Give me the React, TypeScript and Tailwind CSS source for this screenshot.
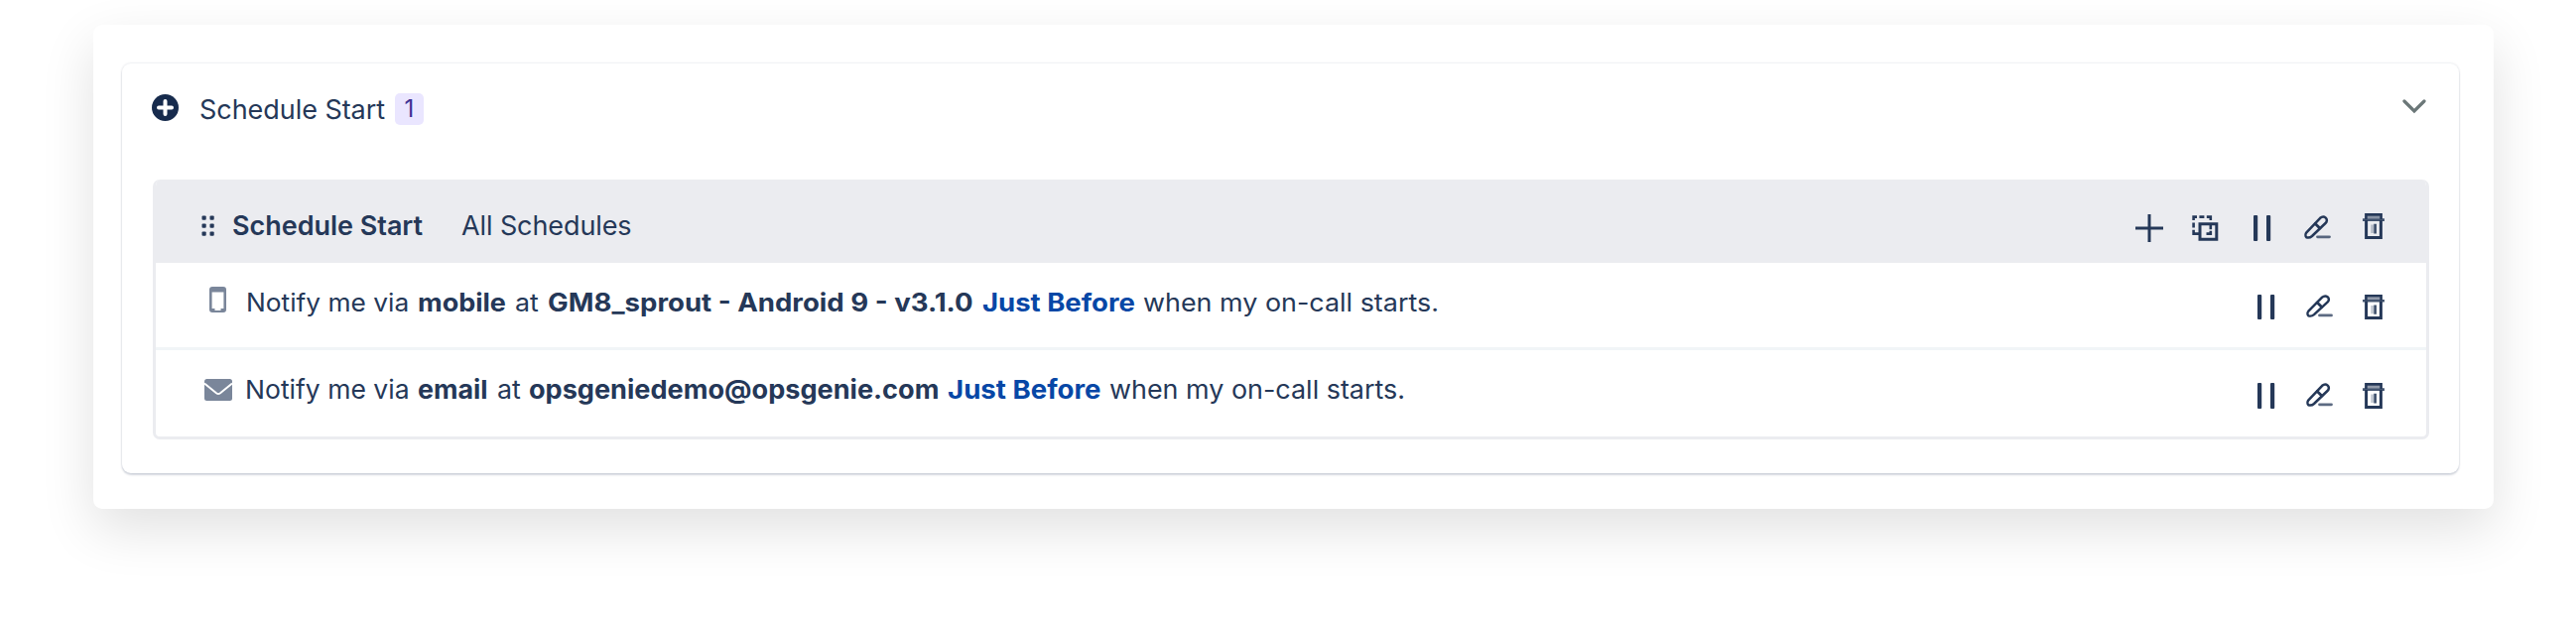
import React from "react";

const NAVY = "#253858";

function PlusIcon() {
  return (
    <svg width="28" height="28" viewBox="0 0 28 28" fill="none" stroke={NAVY} strokeWidth="3">
      <path d="M14 0V28M0 14H28" />
    </svg>
  );
}

function CopyIcon() {
  return (
    <svg width="27" height="26" viewBox="0 0 27 26" fill="none" stroke={NAVY}>
      <path d="M8 8.7H24.8V24.3H8Z" strokeWidth="3" />
      <path d="M1.6 5V1.6H5M7.4 1.6H12.4M14.8 1.6H18.8V5M18.8 8V14.2M18.8 15.8V18.6H14.5M1.6 7.4V12.4M1.6 14.8V18.6H7" strokeWidth="2.6" />
    </svg>
  );
}

function PauseIcon({ height }: { height: number }) {
  return (
    <svg width="18" height={height} viewBox="0 0 18 26" preserveAspectRatio="none" fill={NAVY}>
      <rect x="0" y="0" width="4.2" height="26" rx="1" />
      <rect x="13" y="0" width="4.2" height="26" rx="1" />
    </svg>
  );
}

function EditIcon({ height }: { height: number }) {
  return (
    <svg width="27" height={height} viewBox="0 0 27 24" preserveAspectRatio="none" fill="none" stroke={NAVY} strokeWidth="2.5" strokeLinecap="round" strokeLinejoin="round">
      <path d="M2.4 17.4L16.2 2.8C17.8 1.4 20.2 1.2 21.8 2.6C23.4 4.1 23.1 6.5 21.5 8L8 21C6.4 22.4 4 22.8 2.3 22.2C1.2 21 1.2 18.8 2.4 17.4Z" />
      <path d="M11.2 8.4L15.8 13" strokeWidth="2.8" />
      <path d="M13.5 21.8H25.5" strokeWidth="2.8" opacity="0.75" />
    </svg>
  );
}

function TrashIcon({ height }: { height: number }) {
  return (
    <svg width="22" height={height} viewBox="0 0 22 26" preserveAspectRatio="none" fill="none" stroke={NAVY}>
      <path d="M3.6 7V24.4H18.4V7" strokeWidth="3" />
      <path d="M3.4 6V1.4H18.6V6" strokeWidth="2.6" />
      <path d="M4 3.8H18" strokeWidth="3" opacity="0.5" />
      <path d="M0 6.6H22" strokeWidth="2.6" opacity="0.85" />
      <path d="M9.6 11.5V20" strokeWidth="2.4" opacity="0.3" />
      <path d="M12.6 10.8V20.5" strokeWidth="2.8" opacity="0.85" />
    </svg>
  );
}

function RowActions({ height }: { height: number }) {
  return (
    <div className="flex items-start">
      <div className="w-[49px]"><PauseIcon height={height} /></div>
      <div className="w-[57px]"><EditIcon height={height - 2} /></div>
      <TrashIcon height={height} />
    </div>
  );
}

export default function App() {
  return (
    <div className="h-[624px] w-[2596px] overflow-hidden bg-white px-[94px] pt-[25px] font-['Inter',sans-serif] text-[#253858]">
      <main className="h-[488px] w-[2419px] rounded-[9px] bg-white pt-[39px] pl-[29px] shadow-[0_20px_54px_rgba(0,0,0,0.12)]">
        <section className="h-[413px] w-[2355px] rounded-[9px] pl-[31px] shadow-[0_0_2px_1px_rgba(9,30,66,0.07),0_2px_2px_rgba(9,30,66,0.15)]">
          <header className="flex h-[117px] items-start">
            <svg className="mt-[31px] -ml-px" width="27" height="27" viewBox="0 0 27 27">
              <circle cx="13.5" cy="13.5" r="13.5" fill="#172b4d" />
              <path d="M13.5 7V20M7 13.5H20" stroke="#fff" strokeWidth="4" strokeLinecap="round" />
            </svg>
            <h1 className="mt-[31px] ml-[21px] w-[197px] text-[27px] leading-8 tracking-[-0.05px] whitespace-nowrap">Schedule Start</h1>
            <span className="mt-[30px] h-[32px] w-[29px] rounded-[5px] bg-[#eae6ff] text-center text-[24px] leading-[31px] text-[#403294]">1</span>
            <svg className="mt-[36px] ml-[1994px]" width="24" height="15" viewBox="0 0 24 15" fill="none" stroke="#6b7778" strokeWidth="3.2" strokeLinecap="round">
              <path d="M2 2L12 12L22 2" />
            </svg>
          </header>

          <div className="h-[262px] w-[2294px] overflow-hidden rounded-[7px] border-[3px] border-t-0 border-[#ebecf0]">
            <div className="flex h-[84px] items-start bg-[#ebecf0]">
              <svg className="mt-[36px] ml-[46px]" width="14" height="22" viewBox="0 0 14 22" fill={NAVY}>
                {[0, 8, 16].map((y) => (
                  <g key={y}>
                    <rect x="0.5" y={y + 0.5} width="4.2" height="4.2" rx="1" />
                    <rect x="8.5" y={y + 0.5} width="4.2" height="4.2" rx="1" />
                  </g>
                ))}
              </svg>
              <h2 className="mt-[31px] ml-[17px] w-[231px] text-[27px] leading-8 font-semibold tracking-[-0.03px] whitespace-nowrap">Schedule Start</h2>
              <span className="mt-[31px] w-[1687px] text-[27px] leading-8 tracking-[-0.1px] whitespace-nowrap">All Schedules</span>
              <div className="mt-[35px] w-[57px]"><PlusIcon /></div>
              <div className="mt-[36px] w-[62px]"><CopyIcon /></div>
              <div className="mt-[36px] w-[51px]"><PauseIcon height={26} /></div>
              <div className="mt-[36px] w-[59px]"><EditIcon height={24} /></div>
              <div className="mt-[34px]"><TrashIcon height={26} /></div>
            </div>

            <div className="flex h-[88px] items-start border-b-[3px] border-[#f1f5f7]">
              <svg className="mt-[24px] ml-[54px]" width="17" height="26" viewBox="0 0 17 26">
                <rect width="17" height="26" rx="3" fill="#7a869a" />
                <rect x="2.6" y="5.5" width="11.8" height="16.5" fill="#fff" />
                <rect x="5.5" y="21.5" width="6" height="2.5" fill="#fff" />
              </svg>
              <p className="mt-[24px] ml-[20px] flex h-8 w-[2027px] text-[25px] leading-8 whitespace-nowrap">
                <span className="w-[173px] origin-left scale-x-[1.052]">Notify me via</span>
                <b className="w-[98px] origin-left scale-x-[1.08] font-bold">mobile</b>
                <span className="w-[33px] origin-left scale-x-[1.07]">at</span>
                <b className="w-[438px] origin-left scale-x-[1.104] font-bold">GM8_sprout - Android 9 - v3.1.0</b>
                <b className="w-[162px] origin-left scale-x-[1.1] font-bold text-[#0747a6]">Just Before</b>
                <span className="origin-left scale-x-[1.076]">when my on-call starts.</span>
              </p>
              <div className="mt-[32px]"><RowActions height={25} /></div>
            </div>

            <div className="flex h-[87px] items-start">
              <svg className="mt-[29px] ml-[49px]" width="28" height="22" viewBox="0 0 28 22">
                <rect width="28" height="22" rx="2.5" fill="#7a869a" />
                <path d="M0 4.5L12 14.2Q14 15.6 16 14.2L28 4.5" fill="none" stroke="#fff" strokeWidth="2" />
              </svg>
              <p className="mt-[24px] ml-[13px] flex h-8 w-[2028px] text-[26px] leading-8 whitespace-nowrap">
                <span className="w-[174px] origin-left scale-x-[1.02]">Notify me via</span>
                <b className="w-[80px] origin-left scale-x-[1.03] font-bold">email</b>
                <span className="w-[32px] origin-left scale-x-[1.03]">at</span>
                <b className="w-[422px] origin-left scale-x-[1.042] font-bold">opsgeniedemo@opsgenie.com</b>
                <b className="w-[163px] origin-left scale-x-[1.062] font-bold text-[#0747a6]">Just Before</b>
                <span className="origin-left scale-x-[1.035]">when my on-call starts.</span>
              </p>
              <div className="mt-[33px]"><RowActions height={26} /></div>
            </div>
          </div>
        </section>
      </main>
    </div>
  );
}
